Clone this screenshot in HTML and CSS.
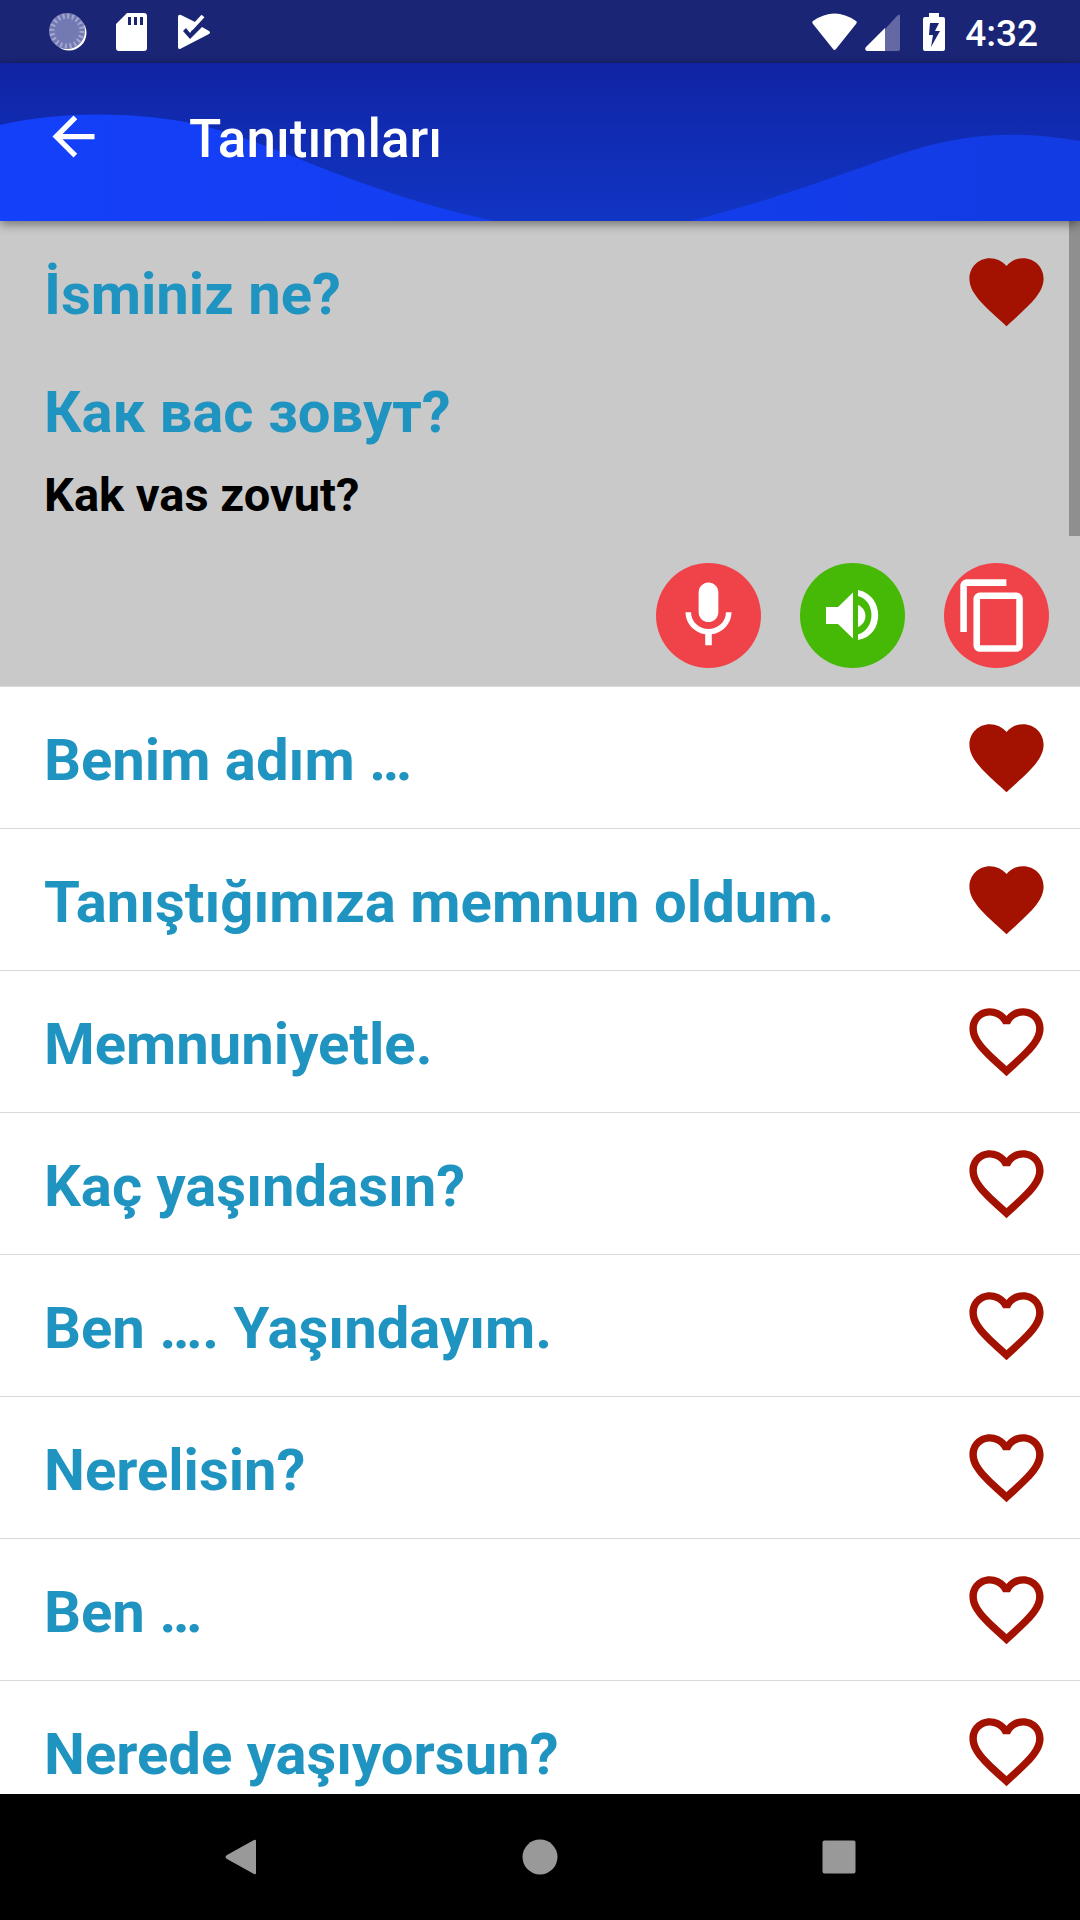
FILE: index.html
```html
<!DOCTYPE html>
<html lang="tr">
<head>
<meta charset="utf-8">
<meta name="viewport" content="width=device-width, initial-scale=1">
<title>Tanıtımları</title>
<link rel="stylesheet" href="styles.css">
</head>
<body>
<svg class="defs" aria-hidden="true">
  <symbol id="heart" viewBox="0 0 24 24"><path d="M12 21.35l-1.45-1.32C5.4 15.36 2 12.28 2 8.5 2 5.42 4.42 3 7.5 3c1.74 0 3.41.81 4.5 2.09C13.09 3.81 14.76 3 16.5 3 19.58 3 22 5.42 22 8.5c0 3.78-3.4 6.86-8.55 11.54L12 21.35z"/></symbol>
  <symbol id="heart-outline" viewBox="0 0 24 24"><path d="M16.5 3c-1.74 0-3.41.81-4.5 2.09C10.91 3.81 9.24 3 7.5 3 4.42 3 2 5.42 2 8.5c0 3.78 3.4 6.86 8.55 11.54L12 21.35l1.45-1.32C18.6 15.36 22 12.28 22 8.5 22 5.42 19.58 3 16.5 3zm-4.4 15.55l-.1.1-.1-.1C7.14 14.24 4 11.39 4 8.5 4 6.5 5.5 5 7.5 5c1.54 0 3.04.99 3.57 2.36h1.87C13.46 5.99 14.96 5 16.5 5c2 0 3.5 1.5 3.5 3.5 0 2.89-3.14 5.74-7.9 10.05z"/></symbol>
</svg>

<div class="screen">
  <div class="status-bar">
    <div class="status-group notifications">
      <svg width="38" height="38" viewBox="0 0 38 38" aria-hidden="true">
        <circle cx="20" cy="20" r="17.5" fill="#fff"/>
        <circle cx="18" cy="18" r="18" fill="#7379b3"/>
        <circle cx="18" cy="18" r="15" fill="none" stroke="#a4a8d0" stroke-width="5" stroke-dasharray="2 2.7"/>
      </svg>
      <svg width="32" height="38" viewBox="0 0 32 38" aria-hidden="true">
        <path fill="#fff" fill-rule="evenodd" d="M11 0H28q3 0 3 3V35q0 3-3 3H3q-3 0-3-3V11zM12 4V12H15V4zM18 4V12H21V4zM24 4V12H27V4z"/>
      </svg>
      <svg width="34" height="36" viewBox="0 0 34 36" aria-hidden="true">
        <path fill="#fff" d="M1 3Q1 0 4 1L20 9 13 19 9 14 6 17 13 25 25 13 32 17Q34 18.500 32 20L4 34.500Q1 36 1 33z"/>
        <path fill="none" stroke="#fff" stroke-width="4" d="M14 15 26 2"/>
      </svg>
    </div>
    <div class="status-group system">
      <svg width="45" height="38" viewBox="0 0 45 38" aria-hidden="true"><path fill="#fff" d="M1 8Q22.500-7 44 8 45.500 9 44 11L24 36Q22.500 38 21 36L1 11Q-.5 9 1 8z"/></svg>
      <svg width="35" height="38" viewBox="0 0 35 38" aria-hidden="true"><path fill="#6469a3" d="M20 16 32 3Q35 0 35 3V36Q35 38 33 38H20z"/><path fill="#fff" d="M20 15V38H2Q-1 37 1 34z"/></svg>
      <svg class="battery" width="22" height="38" viewBox="0 0 22 38" aria-hidden="true"><path fill="#fff" fill-rule="evenodd" d="M6 0H16V4H20Q22 4 22 6V36Q22 38 20 38H2Q0 38 0 36V6Q0 4 2 4H6zM7 10 6 22H10L8 34 17 18H12L16 10z"/></svg>
      <span class="clock">4:32</span>
    </div>
  </div>

  <header class="app-bar">
    <svg class="waves" viewBox="0 0 1080 158" preserveAspectRatio="none" aria-hidden="true">
      <defs>
        <linearGradient id="wave" x1="0" y1="0" x2="1" y2="0"><stop offset="0" stop-color="#1440fa"/><stop offset="1" stop-color="#133be3"/></linearGradient>
      </defs>
      <path fill="url(#wave)" d="M0 62C60 48 130 49 185 59C270 75 350 128 495 158H690C780 136 850 107 910 88C970 69 1020 68 1080 78V158H0z"/>
    </svg>
    <a class="back" href="#" aria-label="Geri"><svg width="63" height="63" viewBox="0 0 24 24" aria-hidden="true"><path fill="#fff" d="M20 11H7.830l5.590-5.590L12 4l-8 8 8 8 1.410-1.410L7.830 13H20v-2z"/></svg></a>
    <h1 class="title">Tanıtımları</h1>
  </header>

  <main class="content">
    <div class="scroll-thumb"></div>
    <ul class="phrases">
      <li class="phrase expanded">
        <div class="row"><span class="text">İsminiz ne?</span><button class="fav" aria-label="Favori" aria-pressed="true"><svg><use href="#heart"/></svg></button></div>
        <div class="details">
          <p class="translation" lang="ru">Как вас зовут?</p>
          <p class="reading">Kak vas zovut?</p>
          <div class="actions">
            <button class="action" aria-label="Kaydet"><svg viewBox="0 0 24 24"><path d="M12 14c1.660 0 2.990-1.340 2.990-3L15 5c0-1.660-1.340-3-3-3S9 3.340 9 5v6c0 1.660 1.340 3 3 3zm5.300-3c0 3-2.540 5.100-5.300 5.100S6.700 14 6.700 11H5c0 3.410 2.720 6.230 6 6.720V21h2v-3.280c3.280-.48 6-3.300 6-6.720h-1.700z"/></svg></button>
            <button class="action listen" aria-label="Dinle"><svg viewBox="13 13 79 79"><path d="M26 44H38L53 29.500V75.500L38 61H26zM58 42C68 46 68 60 58 64zM58 27C85 32 85 73 58 77V71.500C76 66 76 38 58 33z"/></svg></button>
            <button class="action" aria-label="Kopyala"><svg viewBox="1 0 24 24"><path d="M16 1H4c-1.100 0-2 .9-2 2v14h2V3h12V1zm3 4H8c-1.100 0-2 .9-2 2v14c0 1.100.9 2 2 2h11c1.100 0 2-.9 2-2V7c0-1.100-.9-2-2-2zm0 16H8V7h11v14z"/></svg></button>
          </div>
        </div>
      </li>
      <li class="phrase"><div class="row"><span class="text">Benim adım …</span><button class="fav" aria-label="Favori" aria-pressed="true"><svg><use href="#heart"/></svg></button></div></li>
      <li class="phrase"><div class="row"><span class="text">Tanıştığımıza memnun oldum.</span><button class="fav" aria-label="Favori" aria-pressed="true"><svg><use href="#heart"/></svg></button></div></li>
      <li class="phrase"><div class="row"><span class="text">Memnuniyetle.</span><button class="fav" aria-label="Favori" aria-pressed="false"><svg><use href="#heart-outline"/></svg></button></div></li>
      <li class="phrase"><div class="row"><span class="text">Kaç yaşındasın?</span><button class="fav" aria-label="Favori" aria-pressed="false"><svg><use href="#heart-outline"/></svg></button></div></li>
      <li class="phrase"><div class="row"><span class="text">Ben …. Yaşındayım.</span><button class="fav" aria-label="Favori" aria-pressed="false"><svg><use href="#heart-outline"/></svg></button></div></li>
      <li class="phrase"><div class="row"><span class="text">Nerelisin?</span><button class="fav" aria-label="Favori" aria-pressed="false"><svg><use href="#heart-outline"/></svg></button></div></li>
      <li class="phrase"><div class="row"><span class="text">Ben …</span><button class="fav" aria-label="Favori" aria-pressed="false"><svg><use href="#heart-outline"/></svg></button></div></li>
      <li class="phrase"><div class="row"><span class="text">Nerede yaşıyorsun?</span><button class="fav" aria-label="Favori" aria-pressed="false"><svg><use href="#heart-outline"/></svg></button></div></li>
    </ul>
  </main>

  <nav class="nav-bar">
    <button aria-label="Geri"><svg width="36" height="36" viewBox="0 0 36 36"><path d="M31 1Q33 0 33 2V34Q33 36 31 35L4 20Q1 18 4 16z"/></svg></button>
    <button aria-label="Ana ekran"><svg width="36" height="36" viewBox="0 0 36 36"><circle cx="18" cy="18" r="17.500"/></svg></button>
    <button aria-label="Son uygulamalar"><svg width="36" height="36" viewBox="0 0 36 36"><rect x="1.500" y="1.500" width="33" height="33" rx="2"/></svg></button>
  </nav>
</div>
</body>
</html>
```
FILE: styles.css
```css
* {
  box-sizing: border-box;
}

body {
  margin: 0;
  font-family: Roboto, "Noto Sans", sans-serif;
  background: #fff;
}

svg {
  display: block;
}

button {
  border: 0;
  padding: 0;
  background: none;
  cursor: pointer;
}

.defs {
  display: none;
}

.screen {
  display: flex;
  flex-direction: column;
  height: 100vh;
}

/* Status bar */
.status-bar {
  display: flex;
  flex: none;
  justify-content: space-between;
  align-items: center;
  height: 63px;
  padding: 0 42px 0 49px;
  background: #1a2575;
}

.status-group {
  display: flex;
  align-items: center;
}

.notifications {
  gap: 29px;
}

.system {
  gap: 8px;
}

.battery {
  margin-left: 15px;
}

.clock {
  margin-left: 12px;
  color: #fff;
  font-size: 37px;
  font-weight: 500;
  line-height: 44px;
  padding-top: 4px;
}

/* App bar */
.app-bar {
  position: relative;
  z-index: 1;
  display: flex;
  flex: none;
  align-items: center;
  gap: 84px;
  height: 158px;
  padding: 0 42px 11px;
  background: linear-gradient(#1024a3, #1135c4);
  box-shadow: 0 3px 10px rgba(0, 0, 0, 0.45);
}

.waves {
  position: absolute;
  inset: 0;
  width: 100%;
  height: 100%;
}

.back,
.title {
  position: relative;
}

.title {
  margin: 0;
  padding-top: 4px;
  color: #fff;
  font-size: 53px;
  font-weight: 500;
  line-height: 60px;
}

/* Phrase list */
.content {
  position: relative;
  flex: 1;
  min-height: 0;
}

.phrases {
  height: 100%;
  margin: 0;
  padding: 0;
  overflow-y: auto;
  scrollbar-width: none;
  list-style: none;
}

.scroll-thumb {
  position: absolute;
  top: 0;
  right: 0;
  width: 11px;
  height: 315px;
  background: #8f8f8f;
}

.phrase {
  border-bottom: 1px solid #d9d9d9;
}

.expanded {
  background: #c9c9c9;
}

.row {
  display: flex;
  justify-content: space-between;
  align-items: center;
  padding: 26px 29px 26px 44px;
}

.text,
.translation {
  color: #2094c0;
  font-size: 58px;
  font-weight: 700;
  line-height: 76px;
}

.text {
  padding-top: 5px;
}

.fav svg {
  width: 89px;
  height: 89px;
  fill: #a31200;
}

.details {
  display: flex;
  flex-direction: column;
  gap: 13px;
  padding: 12px 31px 18px 44px;
}

.translation,
.reading {
  margin: 0;
}

.reading {
  color: #000;
  font-size: 47px;
  font-weight: 700;
  line-height: 64px;
}

.actions {
  display: flex;
  justify-content: flex-end;
  gap: 39px;
  padding-top: 23px;
}

.action {
  display: flex;
  justify-content: center;
  align-items: center;
  width: 105px;
  height: 105px;
  border-radius: 50%;
  background: #ef4349;
}

.listen {
  background: #45b905;
}

.action svg {
  width: 79px;
  height: 79px;
  fill: #fff;
}

/* System navigation */
.nav-bar {
  display: grid;
  flex: none;
  grid-template-columns: repeat(3, 1fr);
  height: 126px;
  padding: 0 92px;
  background: #000;
}

.nav-bar button {
  display: flex;
  justify-content: center;
  align-items: center;
}

.nav-bar svg {
  fill: #999;
}
```
